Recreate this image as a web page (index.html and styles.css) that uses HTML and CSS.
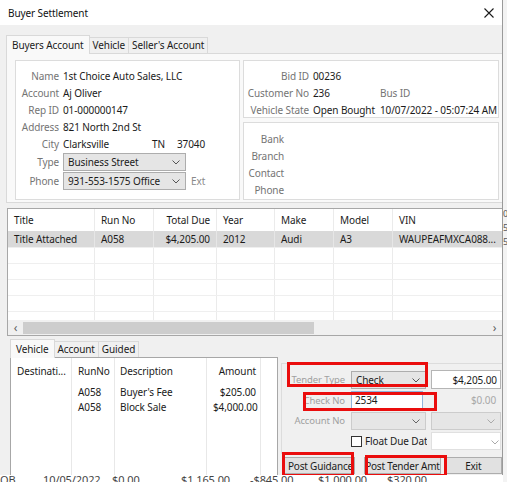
FILE: index.html
```html
<!DOCTYPE html>
<html lang="en">
<head>
<meta charset="utf-8">
<title>Buyer Settlement</title>
<link rel="stylesheet" href="styles.css">
</head>
<body>
<div class="screen">
  <div class="backdrop">
    <div class="bg-right"><span>0</span><span>5</span><span>5.</span></div>
    <div class="bg-row"><span class="c1">OB</span><span class="c2">10/05/2022</span><span class="c3">$0.00</span><span class="c4">$1,165.00</span><span class="c5">-$845.00</span><span class="c6">$1,000.00</span><span class="c7">$320.00</span></div>
  </div>

  <div class="dialog">
    <div class="titlebar">
      <span class="title">Buyer Settlement</span>
      <svg class="close" width="10" height="10" viewBox="0 0 10 10"><path d="M0.5 0.5 L9.5 9.5 M9.5 0.5 L0.5 9.5" stroke="#1a1a1a" stroke-width="1.1" fill="none"/></svg>
    </div>

    <div class="body">
      <div class="tabs top-tabs">
        <div class="tab active">Buyers Account</div>
        <div class="tab">Vehicle</div>
        <div class="tab">Seller's Account</div>
      </div>
      <div class="tabpanel">
        <div class="box buyer">
          <div class="frow"><span class="lbl">Name</span><span class="val">1st Choice Auto Sales, LLC</span></div>
          <div class="frow"><span class="lbl">Account</span><span class="val">Aj Oliver</span></div>
          <div class="frow"><span class="lbl">Rep ID</span><span class="val">01-000000147</span></div>
          <div class="frow"><span class="lbl">Address</span><span class="val">821 North 2nd St</span></div>
          <div class="frow"><span class="lbl">City</span><span class="val city">Clarksville</span><span class="val st">TN</span><span class="val">37040</span></div>
          <div class="frow combo-row"><span class="lbl">Type</span><span class="combo wide">Business Street<svg class="chev" width="8" height="5" viewBox="0 0 8 5"><path d="M0.5 0.5 L4 4 L7.5 0.5" stroke="#555" stroke-width="1" fill="none"/></svg></span></div>
          <div class="frow combo-row"><span class="lbl">Phone</span><span class="combo wide">931-553-1575 Office<svg class="chev" width="8" height="5" viewBox="0 0 8 5"><path d="M0.5 0.5 L4 4 L7.5 0.5" stroke="#555" stroke-width="1" fill="none"/></svg></span><span class="ext">Ext</span></div>
        </div>
        <div class="rightcol">
          <div class="box ids">
            <div class="frow"><span class="lbl">Bid ID</span><span class="val">00236</span></div>
            <div class="frow"><span class="lbl">Customer No</span><span class="val v2">236</span><span class="lbl2">Bus ID</span></div>
            <div class="frow"><span class="lbl">Vehicle State</span><span class="val v2">Open Bought</span><span class="val">10/07/2022 - 05:07:24 AM</span></div>
          </div>
          <div class="box bank">
            <div class="frow"><span class="lbl">Bank</span></div>
            <div class="frow"><span class="lbl">Branch</span></div>
            <div class="frow"><span class="lbl">Contact</span></div>
            <div class="frow"><span class="lbl">Phone</span></div>
          </div>
        </div>
      </div>

      <div class="grid">
        <div class="grid-inner">
          <div class="grow ghead">
            <span>Title</span><span>Run No</span><span class="r">Total Due</span><span>Year</span><span>Make</span><span>Model</span><span>VIN</span>
          </div>
          <div class="grow sel">
            <span>Title Attached</span><span>A058</span><span class="r">$4,205.00</span><span>2012</span><span>Audi</span><span>A3</span><span>WAUPEAFMXCA088...</span>
          </div>
          <div class="grow empty"><span></span><span></span><span></span><span></span><span></span><span></span><span></span></div>
          <div class="grow empty"><span></span><span></span><span></span><span></span><span></span><span></span><span></span></div>
          <div class="grow empty"><span></span><span></span><span></span><span></span><span></span><span></span><span></span></div>
          <div class="grow empty"><span></span><span></span><span></span><span></span><span></span><span></span><span></span></div>
          <div class="grow empty"><span></span><span></span><span></span><span></span><span></span><span></span><span></span></div>
        </div>
        <div class="hscroll">
          <span class="arrow">&lsaquo;</span>
          <div class="track"><div class="thumb"></div></div>
          <span class="arrow">&rsaquo;</span>
        </div>
      </div>

      <div class="bottom">
        <div class="bleft">
          <div class="tabs low-tabs">
            <div class="tab active">Vehicle</div>
            <div class="tab">Account</div>
            <div class="tab">Guided</div>
          </div>
          <div class="list">
            <div class="lcols">
              <div class="lcol c-dest"><div class="lh">Destinati...</div></div>
              <div class="lcol c-run"><div class="lh">RunNo</div><div class="lc">A058</div><div class="lc">A058</div></div>
              <div class="lcol c-desc"><div class="lh">Description</div><div class="lc">Buyer's Fee</div><div class="lc">Block Sale</div></div>
              <div class="lcol c-amt"><div class="lh">Amount</div><div class="lc">$205.00</div><div class="lc">$4,000.00</div></div>
              <div class="lcol c-rest"></div>
            </div>
          </div>
        </div>

        <div class="bright">
          <div class="tender">
            <span class="lbl dis">Tender Type</span>
            <span class="combo">Check<svg class="chev" width="8" height="5" viewBox="0 0 8 5"><path d="M0.5 0.5 L4 4 L7.5 0.5" stroke="#555" stroke-width="1" fill="none"/></svg></span>
            <span class="tbox">$4,205.00</span>

            <span class="lbl dis">Check No</span>
            <span class="tbox focus">2534</span>
            <span class="plain">$0.00</span>

            <span class="lbl dis">Account No</span>
            <span class="combo disabled"><svg class="chev" width="8" height="5" viewBox="0 0 8 5"><path d="M0.5 0.5 L4 4 L7.5 0.5" stroke="#666" stroke-width="1" fill="none"/></svg></span>
            <span class="combo disabled"><svg class="chev" width="8" height="5" viewBox="0 0 8 5"><path d="M0.5 0.5 L4 4 L7.5 0.5" stroke="#aaa" stroke-width="1" fill="none"/></svg></span>

            <span></span>
            <span class="check"><span class="cb"></span><span class="cbl">Float Due Date</span></span>
            <span class="datebox"><svg class="chev" width="8" height="5" viewBox="0 0 8 5"><path d="M0.5 0.5 L4 4 L7.5 0.5" stroke="#aaa" stroke-width="1" fill="none"/></svg></span>
          </div>
          <div class="buttons">
            <span class="btn b1">Post Guidance</span>
            <span class="btn b2">Post Tender Amt</span>
            <span class="btn b3">Exit</span>
          </div>
        </div>
      </div>
    </div>

    <div class="mark m1"></div>
    <div class="mark m2"></div>
    <div class="mark m3"></div>
    <div class="mark m4"></div>
  </div>
</div>
</body>
</html>
```

FILE: styles.css
```css
* { box-sizing: border-box; }
html, body { margin: 0; padding: 0; }
body {
  font-family: "Noto Sans", "Open Sans", sans-serif;
  font-size: 10px;
  letter-spacing: -0.1px;
  color: #1b1b1b;
  background: #ffffff;
}
.screen {
  position: relative;
  width: 507px;
  height: 482px;
  overflow: hidden;
  background: #ffffff;
}

/* background application behind the dialog */
.backdrop { position: absolute; inset: 0; }
.bg-right {
  position: absolute;
  left: 503px; top: 0; width: 4px; height: 482px;
  background: #f3f3f3;
  display: flex; flex-direction: column;
  padding-top: 207px;
  color: #555;
  line-height: 14px;
  font-size: 9px;
}
.bg-row {
  position: absolute;
  left: 0; top: 473px; width: 507px; height: 14px;
  color: #444;
  font-size: 11px;
  line-height: 14px;
}
.bg-row span { position: absolute; top: 0; }
.bg-row .c1 { left: 0; }
.bg-row .c2 { left: 43px; }
.bg-row .c3 { left: 112px; }
.bg-row .c4 { left: 181px; }
.bg-row .c5 { left: 250px; }
.bg-row .c6 { left: 318px; }
.bg-row .c7 { left: 387px; }

/* dialog window */
.dialog {
  position: absolute;
  left: 0; top: 0;
  width: 503px; height: 475px;
  background: #f0f0f0;
  border-right: 1px solid #9a9a9a;
  overflow: hidden;
  display: flex; flex-direction: column;
}
.titlebar {
  height: 25px;
  flex: none;
  background: #ffffff;
  display: flex; align-items: center; justify-content: space-between;
  padding: 0 8px 0 8px;
  font-size: 10px;
  color: #111;
}
.body { padding: 10px 0 0 6px; display: flex; flex-direction: column; }

/* tabs */
.tabs { display: flex; align-items: flex-end; }
.tab {
  height: 16px;
  padding: 0 3px;
  line-height: 15px;
  background: #f0f0f0;
  border: 1px solid #d9d9d9;
  border-bottom: none;
  margin-left: -1px;
  color: #1b1b1b;
  white-space: nowrap;
}
.tab.active {
  height: 19px;
  line-height: 18px;
  background: #f9f9f9;
  padding: 0 5px;
  margin-left: 0;
  position: relative;
  z-index: 1;
  margin-bottom: -1px;
}
.top-tabs { height: 18px; flex: none; }

.tabpanel {
  background: #f9f9f9;
  border: 1px solid #d9d9d9;
  border-right: none;
  height: 150px;
  flex: none;
  padding: 6px 0 0 8px;
  display: flex;
  gap: 3px;
}
.box {
  background: #ffffff;
  border: 1px solid #dcdcdc;
}
.buyer { width: 225px; height: 140px; padding-top: 6px; }
.rightcol { display: flex; flex-direction: column; gap: 4px; width: 256px; }
.ids { height: 58px; padding-top: 6px; }
.bank { height: 78px; padding-top: 7px; }

.frow { display: flex; align-items: center; height: 17px; white-space: nowrap; }
.lbl { color: #747474; text-align: right; flex: none; }
.buyer .lbl { width: 43px; margin-right: 4px; }
.ids .lbl { width: 65px; margin-right: 4px; }
.bank .lbl { width: 40px; }
.val { color: #1b1b1b; }
.city { width: 89px; }
.st { width: 25px; }
.v2 { width: 67px; }
.lbl2 { color: #747474; }
.combo-row { height: 19px; }
.buyer .combo-row:first-of-type { margin-top: 1px; }

.combo {
  position: relative;
  display: flex; align-items: center;
  height: 18px;
  background: #e5e5e5;
  border: 1px solid #adadad;
  padding-left: 4px;
  color: #1b1b1b;
}
.combo .chev { position: absolute; right: 5px; top: 6px; }
.combo.wide { width: 123px; }
.ext { color: #8a8a8a; margin-left: 5px; }

/* data grid */
.grid {
  margin-top: 5px;
  margin-left: 1px;
  width: 496px;
  height: 128px;
  flex: none;
  background: #ffffff;
  border: 1px solid #a7a7a7;
  display: flex; flex-direction: column;
}
.grid-inner { height: 111px; overflow: hidden; }
.grow {
  display: grid;
  grid-template-columns: 86px 59px 63px 58px 59px 59px 110px;
  height: 16px;
  align-items: stretch;
}
.grow span {
  border-left: 1px solid #ebebeb;
  padding-left: 6px;
  line-height: 16px;
  white-space: nowrap;
  overflow: hidden;
}
.grow span:first-child { border-left: none; }
.grow span.r { text-align: right; padding-right: 6px; padding-left: 0; }
.ghead { height: 22px; }
.ghead span { line-height: 22px; color: #1b1b1b; }
.sel { background: #d9d9d9; }
.sel span { border-left-color: #e6e6e6; }
.empty { border-top: 1px solid #efefef; }
.empty span { line-height: 15px; }
.hscroll {
  height: 15px;
  display: flex; align-items: center;
  background: #f0f0f0;
  color: #606060;
}
.hscroll .arrow { width: 15px; text-align: center; font-size: 12px; line-height: 14px; }
.track { flex: 1; height: 12px; position: relative; }
.thumb { position: absolute; left: 0; top: 0; width: 291px; height: 12px; background: #cdcdcd; }

/* bottom area */
.bottom { display: flex; margin-top: 4px; padding-left: 4px; }
.bleft { width: 269px; }
.low-tabs { height: 17px; }
.low-tabs .tab.active { padding: 0 5px; }
.list {
  height: 120px;
  background: #ffffff;
  border: 1px solid #a7a7a7;
  border-bottom: none;
}
.lcols { display: flex; height: 100%; }
.lcol { border-left: 1px solid #e8e8e8; height: 100%; }
.lcol:first-child { border-left: none; }
.c-dest { width: 60px; }
.c-run { width: 43px; }
.c-desc { width: 92px; }
.c-amt { width: 54px; text-align: right; }
.c-rest { flex: 1; }
.lh { height: 27px; line-height: 27px; padding: 0 5px 0 6px; white-space: nowrap; }
.lc { height: 15px; line-height: 15px; padding: 0 5px 0 6px; white-space: nowrap; }
.c-desc .lh, .c-desc .lc { padding-left: 5px; }
.c-amt .lh, .c-amt .lc { padding-right: 4px; }

.bright {
  width: 221px;
  margin-left: 3px;
  margin-top: 23px;
  display: flex; flex-direction: column;
}
.tender {
  border-top: 1px solid #dcdcdc;
  border-left: 1px solid #dcdcdc;
  height: 91px;
  padding-top: 6px;
  display: grid;
  grid-template-columns: 64px 75px 70px;
  grid-template-rows: 19px 18px 19px 18px;
  column-gap: 5px;
  row-gap: 2px;
  align-items: center;
}
.tender .lbl { text-align: right; white-space: nowrap; padding-right: 1px; font-size: 9.5px; }
.dis { color: #a0a0a0; }
.tender .combo { height: 18px; }
.combo.disabled { background: #e6e6e6; border-color: #cccccc; }
.tbox {
  height: 19px;
  background: #ffffff;
  border: 1px solid #b5b5b5;
  display: flex; align-items: center; justify-content: flex-end;
  padding-right: 3px;
}
.tbox.focus {
  justify-content: flex-start;
  padding-left: 3px;
  border-color: #8fb4dc;
  width: 72px;
  height: 18px;
}
.plain { text-align: right; color: #a8a8a8; padding-right: 5px; }
.check { display: flex; align-items: center; white-space: nowrap; overflow: visible; width: 76px; }
.cb {
  width: 11px; height: 11px; flex: none;
  border: 1px solid #333;
  background: #fff;
  margin-right: 3px;
}
.cbl { overflow: hidden; width: 63px; display: inline-block; }
.datebox {
  position: relative;
  height: 18px;
  background: #ffffff;
  border: 1px solid #e0e0e0;
}
.datebox .chev { position: absolute; right: 1px; top: 7px; }

.buttons {
  display: flex;
  margin-top: 3px;
  margin-left: 3px;
}
.btn {
  height: 17px;
  background: #e1e1e1;
  border: 1px solid #adadad;
  display: flex; align-items: center; justify-content: center;
  white-space: nowrap;
  overflow: hidden;
  letter-spacing: -0.2px;
}
.b1 { width: 72px; justify-content: flex-start; padding-left: 3px; }
.b2 { width: 77px; margin-left: 9px; }
.b3 { width: 58px; margin-left: 4px; }

/* red annotation rectangles drawn over the dialog */
.mark {
  position: absolute;
  border: 3px solid #ea0d0d;
  pointer-events: none;
}
.m1 { left: 287px; top: 362px; width: 141px; height: 25px; }
.m2 { left: 303px; top: 392px; width: 134px; height: 19px; }
.m3 { left: 282px; top: 452px; width: 72px; height: 25px; }
.m4 { left: 365px; top: 455px; width: 82px; height: 22px; }
```
